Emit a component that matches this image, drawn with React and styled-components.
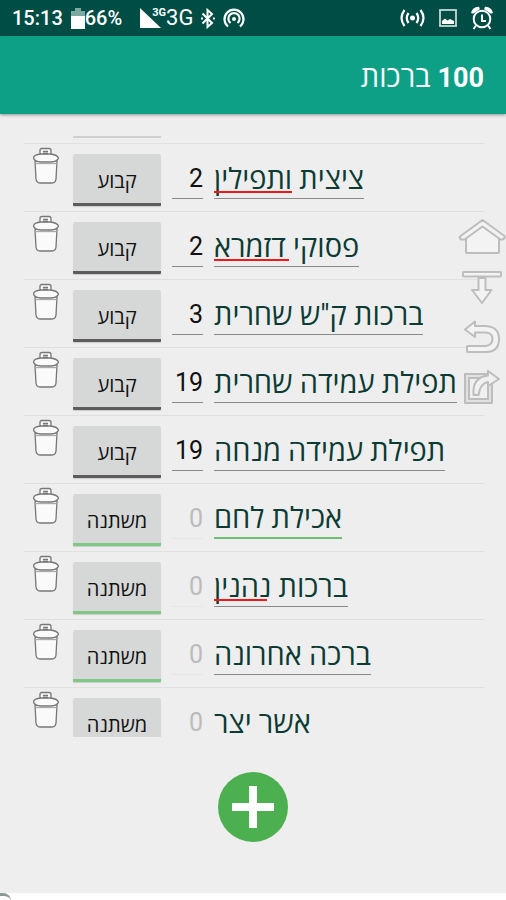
import React, { Component } from 'react';
import styled, { createGlobalStyle } from 'styled-components';

const FIXED = 'קבוע';
const VARIABLE = 'משתנה';

const BLESSINGS = [
    { id: 1, name: 'ציצית ותפילין', count: 2, type: FIXED, typo: 78 },
    { id: 2, name: 'פסוקי דזמרא', count: 2, type: FIXED, typo: 75 },
    { id: 3, name: 'ברכות ק"ש שחרית', count: 3, type: FIXED },
    { id: 4, name: 'תפילת עמידה שחרית', count: 19, type: FIXED },
    { id: 5, name: 'תפילת עמידה מנחה', count: 19, type: FIXED },
    { id: 6, name: 'אכילת לחם', count: 0, type: VARIABLE, active: true },
    { id: 7, name: 'ברכות נהנין', count: 0, type: VARIABLE, typo: 53 },
    { id: 8, name: 'ברכה אחרונה', count: 0, type: VARIABLE },
    { id: 9, name: 'אשר יצר', count: 0, type: VARIABLE }
];

const TrashIcon = () => (
    <svg width="28" height="38" viewBox="0 0 28 38" fill="#fafafa" stroke="#777" strokeWidth="1.3" strokeLinejoin="round">
        <path d="M3 14 L4 32 Q4.500 36 8 36 H20 Q23.500 36 24 32 L25 14 Z" />
        <path d="M8 7 V3.500 Q8 1.500 10 1.500 H17 Q19 1.500 19 3.500 V7" />
        <path d="M1.500 11 Q2 7.500 9 7 H18 Q25 7.500 26.500 11 Q25.500 14.500 19 15 H9 Q2.500 14.500 1.500 11 Z" />
        <path d="M11 4.500 H16 M11 6.500 H16" />
        <path d="M3.500 16.500 H24.500" stroke="#aaa" />
    </svg>
)

const HomeIcon = () => (
    <svg width="48" height="38" viewBox="0 0 48 38" fill="#f3f3f3" stroke="#bdbdbd" strokeWidth="2" strokeLinejoin="round">
        <path d="M8 19 V34 Q8 35 9 35 H40 Q41 35 41 34 V19 L24.500 6 Z" />
        <path d="M24.500 2 L46.500 18 Q47.500 20 45 21.500 H42.500 L24.500 8.500 L6.500 21.500 H3 Q1 20 2 18.500 Z" />
    </svg>
)

const DownIcon = () => (
    <svg width="40" height="34" viewBox="0 0 40 34" fill="#f3f3f3" stroke="#bdbdbd" strokeWidth="2" strokeLinejoin="round">
        <rect x="1" y="1" width="38" height="4.500" rx="1" />
        <path d="M16.500 7 H23.500 V19 H29.500 L20 32 L10 19 H16.500 Z" />
    </svg>
)

const UndoIcon = () => (
    <svg width="38" height="34" viewBox="0 0 38 34" fill="#f3f3f3" stroke="#bdbdbd" strokeWidth="2" strokeLinejoin="round">
        <path d="M2 9.500 L12 1.500 V6 H23 Q36 7 36 19 Q36 32 23 32 H5 Q4 32 4 31 V27 Q4 26 5 26 H23 Q29.500 25 29.500 19 Q29.500 13 23 12.500 H12 V17 Z" />
    </svg>
)

const ShareIcon = () => (
    <svg width="38" height="36" viewBox="0 0 38 36" fill="#f0f0f0" stroke="#bdbdbd" strokeWidth="2" strokeLinejoin="round">
        <path d="M2 5 H29 V34 H2 Z" fill="#e0e0e0" />
        <path d="M6 9 H25 V30 H6 Z" />
        <path d="M10.500 26 Q9 8.500 25 6.500 V2 L36 10 L25 17 V13 Q17 14.500 15.500 26 Z" />
    </svg>
)

const PlusIcon = () => (
    <svg width="42" height="42" viewBox="0 0 42 42" fill="#fff">
        <path d="M17 0 H25 V17 H42 V25 H25 V42 H17 V25 H0 V17 H17 Z" />
    </svg>
)

const BatteryIcon = () => (
    <svg width="14" height="21" viewBox="0 0 14 21">
        <path d="M4 0 H10 V3 H14 V8 H0 V3 H4 Z" fill="#7ba8a0" />
        <rect y="8" width="14" height="13" fill="#fff" />
    </svg>
)

const SignalIcon = () => (
    <svg width="21" height="20" viewBox="0 0 21 20">
        <path d="M0 0 L21 20 H0 Z" fill="#fff" />
    </svg>
)

const BluetoothIcon = () => (
    <svg width="14" height="21" viewBox="0 0 14 21" fill="none" stroke="#fff" strokeWidth="2">
        <path d="M1.500 5.500 L11 15 L6.500 19 V2 L11 6 L1.500 15.500" />
        <path d="M12 10.500 H14 M0 10.500 H2" />
    </svg>
)

const HotspotIcon = () => (
    <svg width="22" height="20" viewBox="0 0 22 20" fill="none" stroke="#fff" strokeWidth="2.200">
        <path d="M5 18.500 A9.500 9.500 0 1 1 17 18.500" />
        <path d="M7.500 15 A5.600 5.600 0 1 1 14.500 15" />
        <circle cx="11" cy="11" r="2" fill="#fff" stroke="none" />
    </svg>
)

const WavesIcon = () => (
    <svg width="25" height="18" viewBox="0 0 25 18" fill="none" stroke="#fff" strokeWidth="2.200">
        <circle cx="12.500" cy="9" r="2.500" fill="#fff" stroke="none" />
        <path d="M8.500 4 Q5 9 8.500 14 M16.500 4 Q20 9 16.500 14" />
        <path d="M4.500 1 Q-1.500 9 4.500 17 M20.500 1 Q26.500 9 20.500 17" />
    </svg>
)

const PictureIcon = () => (
    <svg width="18" height="18" viewBox="0 0 18 18">
        <rect x="1" y="1" width="16" height="16" fill="none" stroke="#c5d9d5" strokeWidth="1.800" />
        <path d="M3 15 V12 L6 9.500 L8.500 11.500 L11 10 L15 12 V15 Z" fill="#fff" />
    </svg>
)

const AlarmIcon = () => (
    <svg width="22" height="24" viewBox="0 0 22 24" fill="none" stroke="#fff" strokeWidth="2">
        <circle cx="11" cy="13" r="8.300" />
        <path d="M1 6.500 Q2 2 7.500 1.500 L8 3 L2 7 Z M21 6.500 Q20 2 14.500 1.500 L14 3 L20 7 Z" fill="#fff" strokeWidth="1.500" />
        <path d="M11 8.500 V15 H15 M5 19.500 L2.500 23 M17 19.500 L19.500 23" />
    </svg>
)

class BlessingRow extends Component {

    constructor(props) {
        super(props);
        this.state = {
            name: props.name,
            count: props.count
        }
        this.setName = this.setName.bind(this)
        this.setCount = this.setCount.bind(this)
    }

    setName(event) {
        this.setState({ name: event.target.value })
    }

    setCount(event) {
        this.setState({ count: event.target.value })
    }

    render() {
        const { type, typo, active, onDelete, onToggle } = this.props;
        const { name, count } = this.state;

        return (
            <Row>
                <TrashButton type="button" aria-label="מחק" onClick={onDelete}>
                    <TrashIcon />
                </TrashButton>
                <TypeButton type="button" $variable={type === VARIABLE} onClick={onToggle}>{type}</TypeButton>
                <CountInput aria-label="כמות" inputMode="numeric" value={count} $empty={Number(count) === 0} onChange={this.setCount} />
                <NameField>
                    <NameInput aria-label="שם הברכה" dir="rtl" spellCheck={false} value={name} $active={active} onChange={this.setName} />
                    {typo && name === this.props.name && <TypoLine $width={typo} />}
                </NameField>
            </Row>
        )
    }
}

class App extends Component {

    constructor(props) {
        super(props);
        this.state = {
            blessings: BLESSINGS
        }
        this.addBlessing = this.addBlessing.bind(this)
    }

    addBlessing() {
        const item = { id: Date.now(), name: '', count: 0, type: VARIABLE };
        this.setState({ blessings: [...this.state.blessings, item] })
    }

    deleteBlessing(id) {
        this.setState({ blessings: this.state.blessings.filter(item => item.id !== id) })
    }

    toggleType(id) {
        this.setState({
            blessings: this.state.blessings.map(item =>
                item.id === id ? { ...item, type: item.type === FIXED ? VARIABLE : FIXED } : item
            )
        })
    }

    render() {
        return (
            <Screen>
                <GlobalStyle />
                <StatusBar>
                    <StatusGroup>
                        <Clock>15:13</Clock>
                        <Battery><BatteryIcon />66%</Battery>
                        <Signal>
                            <SignalIcon />
                            <SmallNetwork>3G</SmallNetwork>
                            <Network>3G</Network>
                        </Signal>
                        <BluetoothIcon />
                        <HotspotIcon />
                    </StatusGroup>
                    <StatusGroup $wide>
                        <WavesIcon />
                        <PictureIcon />
                        <AlarmIcon />
                    </StatusGroup>
                </StatusBar>
                <Header>
                    <Title><TitleNumber>100</TitleNumber> ברכות</Title>
                </Header>
                <List>
                    <ListStart />
                    {
                        this.state.blessings.map(item =>
                            <BlessingRow
                                key={item.id}
                                {...item}
                                onDelete={() => this.deleteBlessing(item.id)}
                                onToggle={() => this.toggleType(item.id)}
                            />
                        )
                    }
                </List>
                <Footer>
                    <AddButton type="button" aria-label="הוסף" onClick={this.addBlessing}>
                        <PlusIcon />
                    </AddButton>
                </Footer>
                <BottomEdge />
                <SideTools>
                    <ToolButton type="button" aria-label="בית"><HomeIcon /></ToolButton>
                    <ToolButton type="button" aria-label="למטה"><DownIcon /></ToolButton>
                    <ToolButton type="button" aria-label="בטל"><UndoIcon /></ToolButton>
                    <ToolButton type="button" aria-label="שתף"><ShareIcon /></ToolButton>
                </SideTools>
            </Screen>
        )
    }
}

export default App;


// CSS //

const GlobalStyle = createGlobalStyle`
* {
box-sizing: border-box;
}

body {
margin: 0;
background: #eee;
}

body, button, input {
font-family: Roboto, "Open Sans", "Noto Sans", sans-serif;
}

svg {
display: block;
flex-shrink: 0;
}
`

const Screen = styled.div`
position: relative;
display: flex;
flex-direction: column;
height: 100vh;
min-height: 480px;
background: #eee;
`

const StatusBar = styled.div`
display: flex;
flex-shrink: 0;
justify-content: space-between;
align-items: center;
height: 36px;
padding: 0 13px 0 12px;
background: #004d45;
color: #fff;
`

const StatusGroup = styled.div`
display: flex;
align-items: center;
gap: ${props => props.$wide ? '14px' : '8px'};
`

const Clock = styled.span`
font-size: 20px;
font-weight: 500;
`

const Battery = styled.span`
display: flex;
align-items: center;
margin-right: 10px;
font-size: 20px;
font-weight: 500;
`

const Signal = styled.span`
display: flex;
align-items: center;
`

const SmallNetwork = styled.small`
align-self: flex-start;
margin: 3px 0 0 -9px;
font-size: 11px;
font-weight: 700;
line-height: 11px;
`

const Network = styled.span`
font-size: 22px;
line-height: 28px;
`

const Header = styled.header`
display: flex;
flex-shrink: 0;
justify-content: flex-end;
align-items: center;
height: 78px;
padding: 4px 22px 0;
background: #0e9f87;
box-shadow: 0 1px 3px rgba(0, 0, 0, 0.4);
`

const Title = styled.h1`
margin: 0;
direction: rtl;
font-size: 29px;
font-weight: 500;
line-height: 38px;
color: #fff;
`

const TitleNumber = styled.span`
font-size: 27px;
font-weight: 700;
`

const List = styled.main`
flex: 1;
min-height: 0;
margin: 22px 22px 0 24px;
overflow-y: auto;
scrollbar-width: none;
`

const ListStart = styled.div`
height: 7px;
padding-left: 49px;

&::before {
content: "";
display: block;
width: 88px;
height: 2px;
background: #d0d0d0;
}
`

const Row = styled.div`
display: flex;
align-items: flex-start;
height: 68px;
border-top: 1px solid #e0e0e0;
`

const TrashButton = styled.button`
margin: 3px 13px 0 8px;
padding: 0;
border: none;
background: none;
cursor: pointer;
`

const TypeButton = styled.button`
flex-shrink: 0;
width: 88px;
height: 52px;
margin-top: 10px;
padding: 4px 0 0;
border: none;
border-bottom: 3px solid ${props => props.$variable ? '#81c784' : '#5c5c5c'};
border-radius: 3px 3px 1px 1px;
background: #d6d7d7;
box-shadow: 0 1px 1px rgba(0, 0, 0, 0.15);
font-size: 20px;
color: #111;
cursor: pointer;
`

const CountInput = styled.input`
flex-shrink: 0;
width: 31px;
height: 45px;
margin: 10px 11px 0;
padding: 5px 0 0;
border: none;
border-bottom: 1px solid ${props => props.$empty ? '#e6e6e6' : '#8a8a8a'};
background: none;
outline: none;
font-size: 25px;
text-align: right;
color: ${props => props.$empty ? '#bbb' : '#111'};
`

const NameField = styled.div`
position: relative;
margin-top: 10px;
`

const NameInput = styled.input`
display: block;
field-sizing: content;
min-width: 60px;
height: 45px;
padding: 2px 0 0;
border: none;
border-bottom: ${props => props.$active ? '2px solid #6fbf73' : '1px solid #8a8a8a'};
background: none;
outline: none;
font-size: 29px;
color: #0b3b33;
`

const TypoLine = styled.span`
position: absolute;
left: 0;
bottom: 6px;
width: ${props => props.$width}px;
height: 2px;
background: #f01818;
`

const Footer = styled.footer`
display: flex;
flex-shrink: 0;
justify-content: center;
padding: 35px 0 51px;
`

const AddButton = styled.button`
display: flex;
justify-content: center;
align-items: center;
width: 70px;
height: 70px;
padding: 0;
border: none;
border-radius: 50%;
background: #4caf50;
cursor: pointer;
`

const BottomEdge = styled.div`
flex-shrink: 0;
height: 7px;
background: #fff;

&::before {
content: "";
display: block;
width: 11px;
height: 7px;
border-top: 3px solid #8a9995;
border-top-right-radius: 8px;
}
`

const SideTools = styled.nav`
position: absolute;
top: 218px;
right: 0;
display: flex;
flex-direction: column;
align-items: center;
gap: 15px;
`

const ToolButton = styled.button`
padding: 0;
border: none;
background: none;
cursor: pointer;
`
